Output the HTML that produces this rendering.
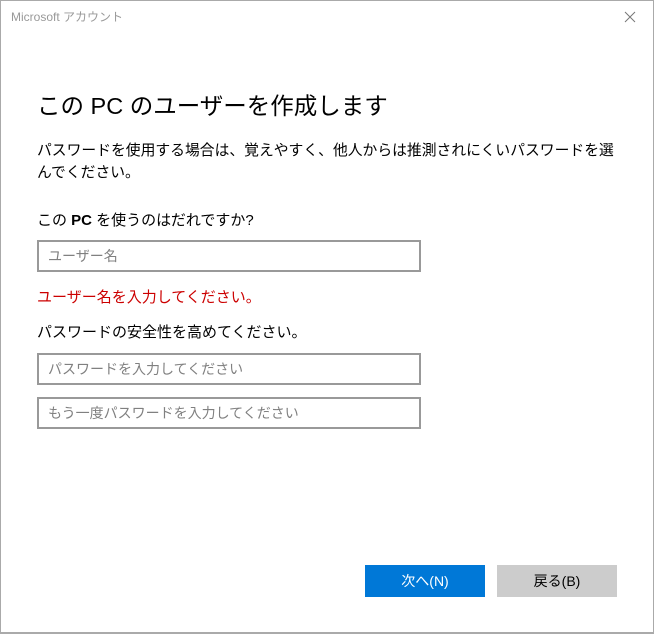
<!DOCTYPE html>
<html><head><meta charset="utf-8"><style>
*{margin:0;padding:0;box-sizing:border-box}
body{width:654px;height:634px;background:#fff;font-family:"Liberation Sans","Noto Sans CJK JP",sans-serif;position:relative;overflow:hidden}
.win{position:absolute;left:0;top:0;width:654px;height:634px;border:1px solid #aaa;border-bottom:2px solid #aaa}
.t{position:absolute;white-space:nowrap}
.inp{position:absolute;left:37px;width:384px;height:32px;border:2px solid #999;color:#808080;font-size:14px;padding-left:9px;line-height:28px}
.btn{position:absolute;top:565px;width:120px;height:32px;font-size:14px;text-align:center;line-height:32px}
</style></head><body>
<div class="win"></div>
<div class="t" style="left:11px;top:8px;font-size:12px;color:#999">Microsoft アカウント</div>
<svg style="position:absolute;left:624px;top:11px" width="12" height="12"><path d="M1 1L11 11M11 1L1 11" stroke="#777" stroke-width="1"/></svg>
<div class="t" style="left:37px;top:87px;font-size:23.5px;color:#000">この PC のユーザーを作成します</div>
<div class="t" style="left:37px;top:140px;font-size:14.8px;line-height:22px;color:#000">パスワードを使用する場合は、覚えやすく、他人からは推測されにくいパスワードを選<br>んでください。</div>
<div class="t" style="left:37px;top:209px;font-size:15px;color:#000">この <b>PC</b> を使うのはだれですか?</div>
<div class="inp" style="top:240px">ユーザー名</div>
<div class="t" style="left:37px;top:286px;font-size:15px;color:#c00">ユーザー名を入力してください。</div>
<div class="t" style="left:37px;top:321px;font-size:15px;color:#000">パスワードの安全性を高めてください。</div>
<div class="inp" style="top:353px">パスワードを入力してください</div>
<div class="inp" style="top:397px">もう一度パスワードを入力してください</div>
<div class="btn" style="left:365px;background:#0078d7;color:#fff">次へ(N)</div>
<div class="btn" style="left:497px;background:#ccc;color:#000">戻る(B)</div>
</body></html>
